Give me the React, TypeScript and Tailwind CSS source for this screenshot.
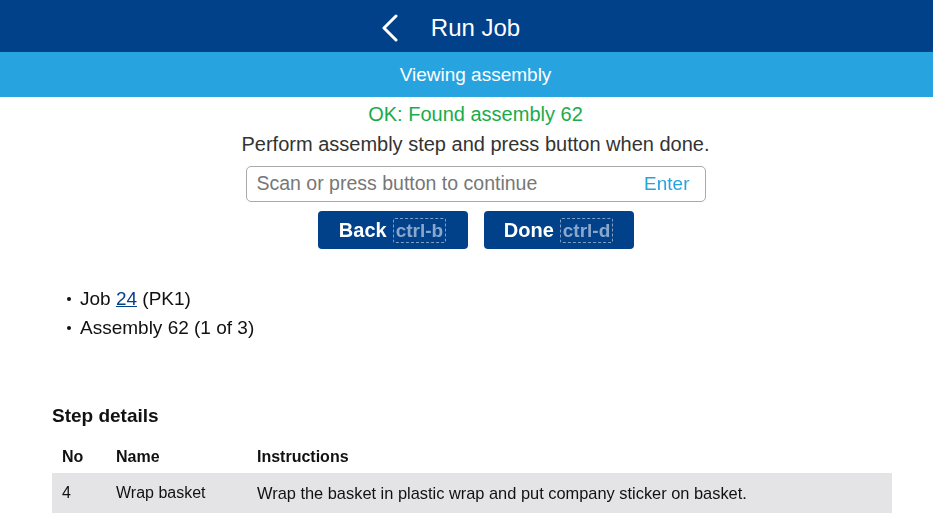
import { useState } from "react";

function ChevronLeft() {
  return (
    <svg width="18" height="28" viewBox="0 0 18 28" fill="none">
      <path d="M15 2 L3 14 L15 26" stroke="white" strokeWidth="3" strokeLinecap="round" strokeLinejoin="round" />
    </svg>
  );
}

export default function App() {
  const [value, setValue] = useState("");

  return (
    <div className="min-h-[528px] bg-white text-[#222]" style={{ fontFamily: '"Liberation Sans", Arial, sans-serif' }}>
      <div className="relative flex h-[52px] items-center justify-center bg-[#00418a] pl-[18px] pt-[3px]">
        <button className="absolute left-[381px] top-[14px] flex items-center">
          <ChevronLeft />
        </button>
        <h1 className="text-[24px] text-white">Run Job</h1>
      </div>
      <div className="flex h-[45px] items-center justify-center bg-[#27a3e0] pl-[18px] pt-[2px] text-[19px] text-white">
        Viewing assembly
      </div>

      <div className="flex flex-col items-center pl-[18px]">
        <p className="mt-[5px] text-[20px] leading-[24px] text-[#1aab4a]">OK: Found assembly 62</p>
        <p className="mt-[6px] text-[20px] leading-[24px] text-[#333]">Perform assembly step and press button when done.</p>
        <div className="mt-[10px] flex h-[36px] w-[460px] items-center rounded-[5px] border border-[#aaa] px-[10px]">
          <input
            autoFocus
            value={value}
            onChange={(e) => setValue(e.target.value)}
            placeholder="Scan or press button to continue"
            className="flex-1 bg-transparent text-[19.5px] text-[#333] outline-none placeholder:text-[#777]"
          />
          <span className="mr-[5px] text-[19px] text-[#27a3e0]">Enter</span>
        </div>
        <div className="mt-[9px] flex gap-[16px]">
          <button className="flex h-[38px] w-[150px] items-center justify-center gap-[6px] rounded-[4px] bg-[#00418a] text-[20px] font-bold text-white">
            Back
            <span className="rounded-[2px] border border-dashed border-[#7f9fc5] px-[2px] text-[19px] font-bold leading-[23px] text-[#8aa8cc]">ctrl-b</span>
          </button>
          <button className="flex h-[38px] w-[150px] items-center justify-center gap-[6px] rounded-[4px] bg-[#00418a] text-[20px] font-bold text-white">
            Done
            <span className="rounded-[2px] border border-dashed border-[#7f9fc5] px-[2px] text-[19px] font-bold leading-[23px] text-[#8aa8cc]">ctrl-d</span>
          </button>
        </div>
      </div>

      <ul className="ml-[62px] mt-[35px] text-[19px] leading-[29px] text-[#111]">
        <li className="flex items-center">
          <span className="flex w-[18px] justify-center pr-[4px]">
            <span className="h-[4px] w-[4px] rounded-full bg-[#111]" />
          </span>
          <span>
            Job <a href="#" className="text-[#00418a] underline">24</a> (PK1)
          </span>
        </li>
        <li className="flex items-center">
          <span className="flex w-[18px] justify-center pr-[4px]">
            <span className="h-[4px] w-[4px] rounded-full bg-[#111]" />
          </span>
          <span>Assembly 62 (1 of 3)</span>
        </li>
      </ul>

      <div className="mx-[52px] mt-[62px] w-[840px]">
        <h2 className="text-[19px] font-bold leading-[24px] text-[#111]">Step details</h2>
        <table className="mt-[13px] w-full border-collapse text-left text-[16px] text-[#111]">
          <thead>
            <tr className="h-[32px]">
              <th className="w-[54px] pl-[10px] font-bold">No</th>
              <th className="w-[141px] pl-[10px] font-bold">Name</th>
              <th className="pl-[10px] font-bold">Instructions</th>
            </tr>
          </thead>
          <tbody>
            <tr className="h-[40px] bg-[#e4e4e6]">
              <td className="pl-[10px]">4</td>
              <td className="pl-[10px]">Wrap basket</td>
              <td className="pl-[10px] text-[16.4px]">Wrap the basket in plastic wrap and put company sticker on basket.</td>
            </tr>
          </tbody>
        </table>
      </div>
    </div>
  );
}
